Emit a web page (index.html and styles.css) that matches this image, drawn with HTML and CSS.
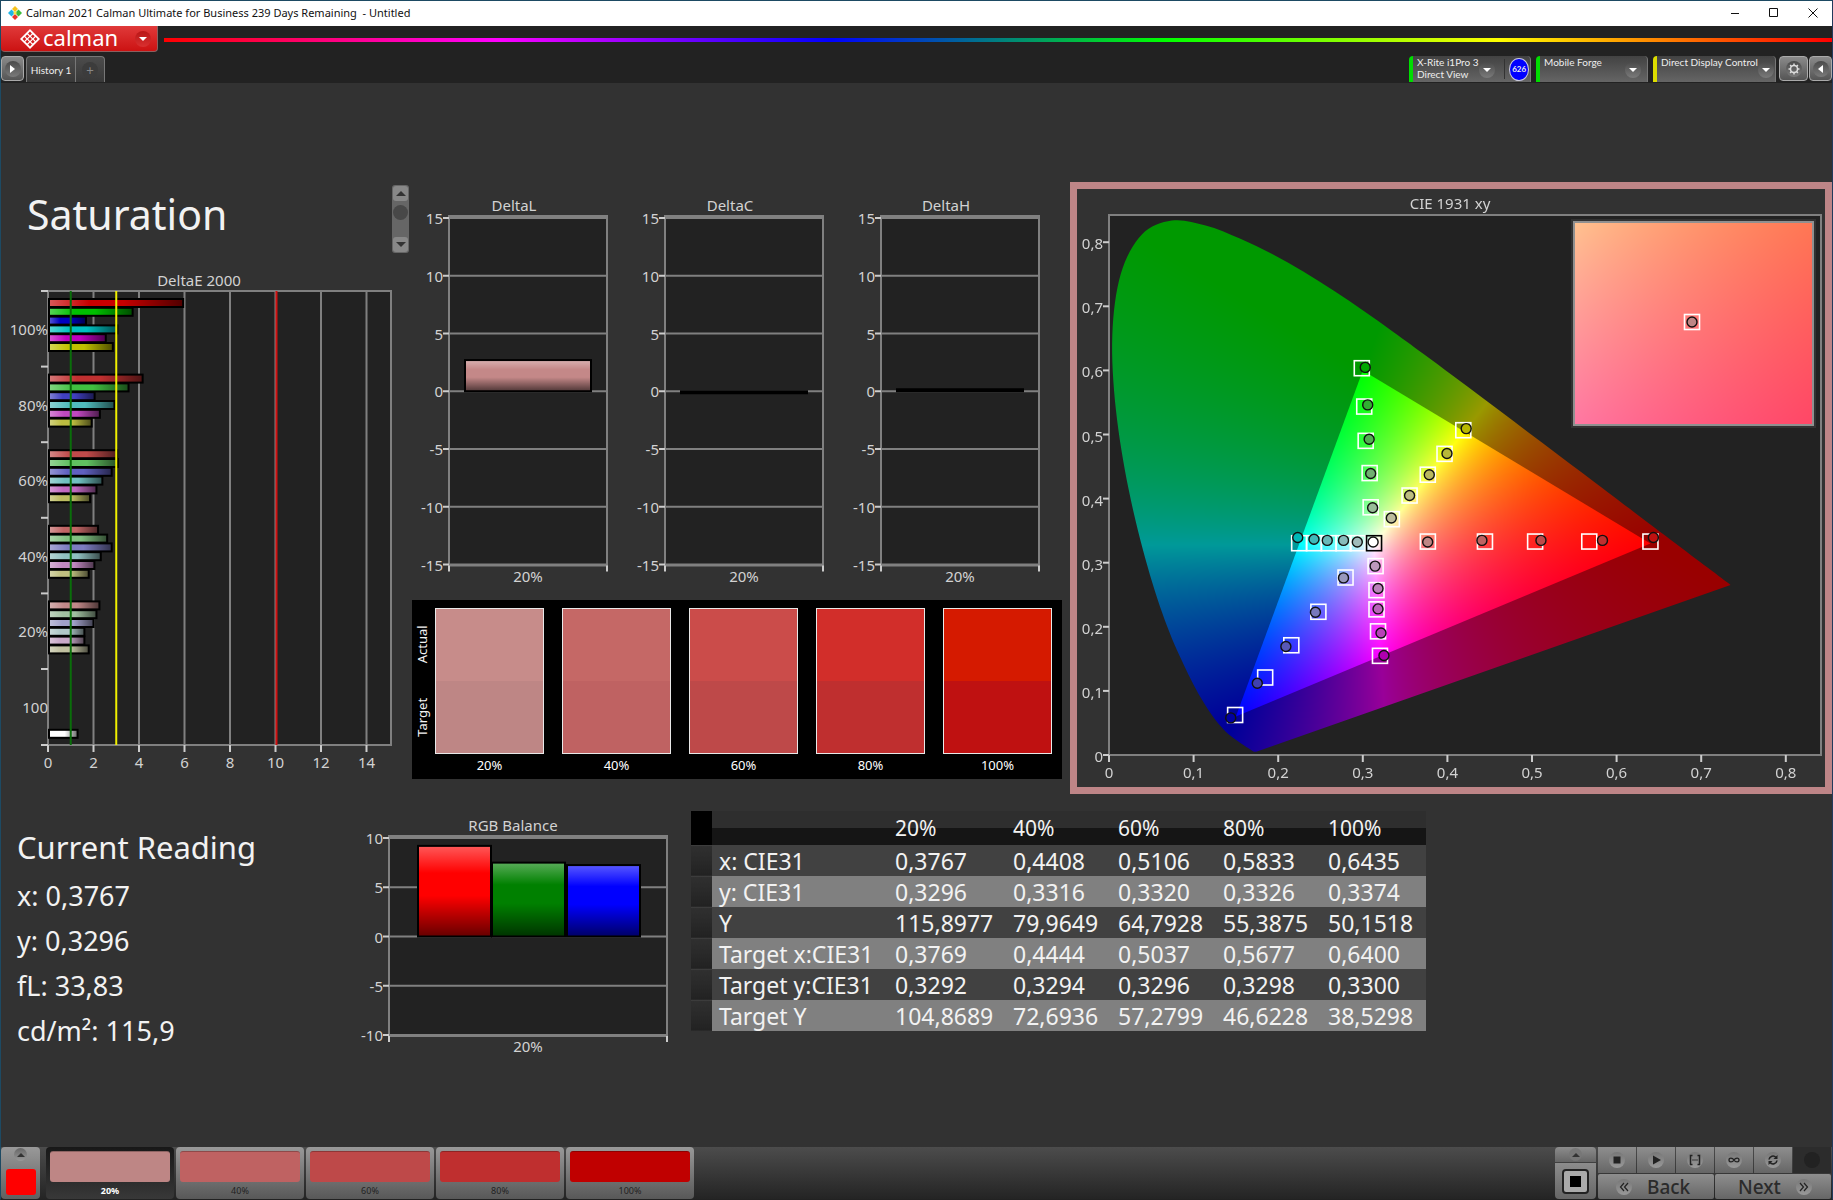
FILE: index.html
```
<!DOCTYPE html>
<html lang="en">
<head>
    <meta charset="UTF-8">
    <meta name="viewport" content="width=device-width, initial-scale=1.0">
    <title>Calman 2021 - Untitled</title>
    <link rel="stylesheet" href="styles.css">
</head>
<body>
<div class="window">

    <header class="titlebar">
        <svg class="app-icon" viewBox="0 0 14 14">
            <path d="M7 0l3 3-3 3-3-3z" fill="#f6c21c"/>
            <path d="M3.500 3.500L7 7l-3.500 3.500L0 7z" fill="#1fb5e8"/>
            <path d="M10.500 3.500L14 7l-3.500 3.500L7 7z" fill="#3dbb3d"/>
            <path d="M7 8l3 3-3 3-3-3z" fill="#e8352c"/>
            <path d="M7 5l2 2-2 2-2-2z" fill="#f4e14a"/>
        </svg>
        <span class="app-title">Calman 2021 Calman Ultimate for Business 239 Days Remaining &nbsp;- Untitled</span>
        <button class="win-btn" aria-label="Minimize"><svg viewBox="0 0 10 10"><path d="M1 5.500h8"/></svg></button>
        <button class="win-btn" aria-label="Maximize"><svg viewBox="0 0 10 10"><path d="M.5.5h8v8h-8z"/></svg></button>
        <button class="win-btn" aria-label="Close"><svg viewBox="0 0 10 10"><path d="M.5.5l9 9M9.500.5l-9 9"/></svg></button>
    </header>

    <div class="brandbar">
        <button class="brand">
            <svg class="brand-mark" viewBox="0 0 20 20">
                <path d="M10 0L20 10 10 20 0 10z" fill="#fff"/>
                <g fill="#d5201f">
                    <path d="M10 2.600l1.900 1.900-1.900 1.900-1.900-1.900zM7.200 5.400l1.900 1.900-1.900 1.900-1.900-1.900zM12.800 5.400l1.900 1.900-1.900 1.900-1.900-1.900zM4.400 8.100l1.900 1.900-1.900 1.900L2.500 10zM10 8.100l1.900 1.900-1.900 1.900L8.100 10zM15.600 8.100l1.900 1.900-1.900 1.900-1.900-1.900zM7.200 10.800l1.900 1.900-1.900 1.900-1.900-1.900zM12.800 10.800l1.900 1.900-1.900 1.900-1.900-1.900zM10 13.600l1.900 1.900-1.900 1.900-1.900-1.900z"/>
                </g>
            </svg>
            <span class="brand-name">calman</span>
            <span class="knob knob-red"><i class="tri tri-down"></i></span>
        </button>
        <div class="rainbow"></div>
    </div>

    <nav class="tabbar">
        <button class="mini-btn" aria-label="Expand"><span class="knob"><i class="tri tri-right"></i></span></button>
        <button class="tab">History 1</button>
        <button class="tab tab-add" aria-label="Add tab"><span class="knob">+</span></button>
        <div class="devices">
            <button class="device device-meter"><span class="device-name">X-Rite i1Pro 3<br>Direct View</span><span class="knob"><i class="tri tri-down"></i></span><span class="device-split"></span><span class="badge">626</span></button>
            <button class="device device-source"><span class="device-name">Mobile Forge</span><span class="knob"><i class="tri tri-down"></i></span></button>
            <button class="device device-display"><span class="device-name">Direct Display Control</span><span class="knob"><i class="tri tri-down"></i></span></button>
            <button class="mini-btn settings" aria-label="Settings">
                <span class="knob"><svg viewBox="0 0 12 12"><circle cx="6" cy="6" r="3.500" fill="none" stroke="#ddd" stroke-width="1.500"/><path d="M6 .5v2M6 9.500v2M.5 6h2M9.500 6h2M2.100 2.100l1.400 1.400M8.500 8.500l1.400 1.400M2.100 9.900l1.400-1.400M8.500 3.500l1.400-1.400" stroke="#ddd" stroke-width="1.500"/></svg></span>
            </button>
            <button class="mini-btn" aria-label="Collapse"><span class="knob"><i class="tri tri-left"></i></span></button>
        </div>
    </nav>

    <main class="workspace">
        <section class="upper">
            <div class="col-left">
                <h1>Saturation</h1>
                <svg id="deltaE" class="chart chart-de"></svg>
            </div>
            <div class="scroller">
                <button aria-label="Up"><i class="tri tri-up"></i></button>
                <span class="scroller-thumb"></span>
                <button aria-label="Down"><i class="tri tri-down"></i></button>
            </div>
            <div class="col-mid">
                <div class="deltas">
                    <svg id="deltaL" class="chart chart-delta"></svg>
                    <svg id="deltaC" class="chart chart-delta"></svg>
                    <svg id="deltaH" class="chart chart-delta"></svg>
                </div>
                <div class="swatches">
                    <div class="swatch-side"><span>Actual</span><span>Target</span></div>
                    <div class="swatch"><div class="pair"><i class="a20"></i><i class="t20"></i></div>20%</div>
                    <div class="swatch"><div class="pair"><i class="a40"></i><i class="t40"></i></div>40%</div>
                    <div class="swatch"><div class="pair"><i class="a60"></i><i class="t60"></i></div>60%</div>
                    <div class="swatch"><div class="pair"><i class="a80"></i><i class="t80"></i></div>80%</div>
                    <div class="swatch"><div class="pair"><i class="a100"></i><i class="t100"></i></div>100%</div>
                </div>
            </div>
            <div class="cie">
                <canvas id="cieFill" width="748" height="598"></canvas>
                <svg id="ciePlot" class="chart" viewBox="0 0 748 598"></svg>
            </div>
        </section>

        <section class="lower">
            <div class="reading">
                <h2>Current Reading</h2>
                <p>x: 0,3767</p>
                <p>y: 0,3296</p>
                <p>fL: 33,83</p>
                <p>cd/m²: 115,9</p>
            </div>
            <svg id="rgb" class="chart chart-rgb"></svg>
            <table class="data">
                <thead>
                    <tr><td class="grip"></td><td class="name"></td><th class="first">20%</th><th>40%</th><th>60%</th><th>80%</th><th>100%</th></tr>
                </thead>
                <tbody>
                    <tr><td class="grip"></td><th>x: CIE31</th><td>0,3767</td><td>0,4408</td><td>0,5106</td><td>0,5833</td><td>0,6435</td></tr>
                    <tr><td class="grip"></td><th>y: CIE31</th><td>0,3296</td><td>0,3316</td><td>0,3320</td><td>0,3326</td><td>0,3374</td></tr>
                    <tr><td class="grip"></td><th>Y</th><td>115,8977</td><td>79,9649</td><td>64,7928</td><td>55,3875</td><td>50,1518</td></tr>
                    <tr><td class="grip"></td><th>Target x:CIE31</th><td>0,3769</td><td>0,4444</td><td>0,5037</td><td>0,5677</td><td>0,6400</td></tr>
                    <tr><td class="grip"></td><th>Target y:CIE31</th><td>0,3292</td><td>0,3294</td><td>0,3296</td><td>0,3298</td><td>0,3300</td></tr>
                    <tr><td class="grip"></td><th>Target Y</th><td>104,8689</td><td>72,6936</td><td>57,2799</td><td>46,6228</td><td>38,5298</td></tr>
                </tbody>
            </table>
        </section>
    </main>

    <footer class="footer">
        <button class="current" aria-label="Current color"><span class="knob"><i class="tri tri-up"></i></span><i class="current-color"></i></button>
        <div class="steps">
            <button class="step active"><i class="t20"></i>20%</button>
            <button class="step"><i class="t40"></i>40%</button>
            <button class="step"><i class="t60"></i>60%</button>
            <button class="step"><i class="t80"></i>80%</button>
            <button class="step"><i class="full"></i>100%</button>
        </div>
        <div class="pattern">
            <button class="pattern-up" aria-label="Pattern menu"><span class="knob"><i class="tri tri-up"></i></span></button>
            <button class="pattern-view" aria-label="Pattern"><i></i></button>
        </div>
        <div class="transport">
            <button aria-label="Stop"><span class="knob"><svg viewBox="0 0 12 12"><path d="M2.500 2.500h7v7h-7z" fill="#222"/></svg></span></button>
            <button aria-label="Read"><span class="knob"><svg viewBox="0 0 12 12"><path d="M3 1.500l8 4.500-8 4.500z" fill="#222"/></svg></span></button>
            <button aria-label="Read series"><span class="knob"><svg viewBox="0 0 12 12"><path d="M3.500 1.500h-2v9h2M8.500 1.500h2v9h-2M3.500 6h1M5.500 6h1M7.500 6h1" fill="none" stroke="#222" stroke-width="1.500"/></svg></span></button>
            <button aria-label="Continuous"><span class="knob"><svg viewBox="0 0 12 12"><path d="M6 6C4.500 3.500 1 3.500 1 6s3.500 2.500 5 0 5-2.500 5 0-3.500 2.500-5 0z" fill="none" stroke="#222" stroke-width="1.300"/></svg></span></button>
            <button aria-label="Refresh"><span class="knob"><svg viewBox="0 0 12 12"><path d="M2 5.500A4 4 0 0 1 9 3.500M10 6.500A4 4 0 0 1 3 8.500" fill="none" stroke="#222" stroke-width="1.600"/><path d="M10.500 1v4h-4zM1.500 11V7h4z" fill="#222"/></svg></span></button>
            <button class="off" aria-label="Idle"><span class="knob"></span></button>
            <button class="wide"><span class="knob"><svg viewBox="0 0 12 12"><path d="M6 2L2.500 6 6 10M10 2L6.500 6 10 10" fill="none" stroke="#222" stroke-width="1.200"/></svg></span>Back</button>
            <button class="wide wide-next">Next<span class="knob"><svg viewBox="0 0 12 12"><path d="M2 2l3.500 4L2 10M6 2l3.500 4L6 10" fill="none" stroke="#222" stroke-width="1.200"/></svg></span></button>
        </div>
    </footer>
</div>
<script src="charts.js"></script>
</body>
</html>
```
FILE: styles.css
```
* { box-sizing: border-box; }
body { margin: 0; background: #323232; font-family: "Noto Sans", "Open Sans", sans-serif; color: #f2f2f2; }
button { font: inherit; color: inherit; border: 0; padding: 0; background: none; cursor: pointer; }
.window { display: flex; flex-direction: column; min-height: 100vh; border: 1px solid #1d4a63; border-bottom-color: #222; border-right-color: #223a5c; }

/* title bar */
.titlebar { display: flex; align-items: center; height: 25px; padding-bottom: 1px; background: #fff; color: #111; }
.app-icon { width: 14px; height: 14px; margin: 0 4px 0 7px; }
.app-title { flex: 1; font-size: 11px; line-height: 16px; }
.win-btn { width: 39px; height: 24px; display: flex; align-items: center; justify-content: center; }
.win-btn svg { width: 10px; height: 10px; fill: none; stroke: #111; }

.brandbar { display: flex; align-items: center; height: 30px; background: #222; }
.brand { display: flex; align-items: center; align-self: flex-start; width: 157px; height: 26px; padding: 0 6px 0 19px; border: 1px solid #8b6060; border-width: 0 1px 1px 0; border-radius: 0 0 4px 4px; background: linear-gradient(#e03a3a, #cc1212); color: #fff; }
.brand-mark { width: 20px; height: 20px; }
.brand-name { flex: 1; margin-left: 3px; padding-bottom: 3px; font-size: 22px; line-height: 22px; text-align: left; }
.rainbow { flex: 1; height: 4px; margin: 0 0 3px 6px; background: linear-gradient(90deg, #f00, #f0f 20%, #00f 40%, #0f0 60%, #ff0 80%, #f00); }

.knob { display: inline-flex; align-items: center; justify-content: center; flex: none; width: 16px; height: 16px; border-radius: 50%; background: linear-gradient(#4a4a4a, #7a7a7a); }
.knob svg { width: 12px; height: 12px; }
.knob-red { background: linear-gradient(#b91616, #d93030); }
.tri { display: block; border: 4px solid transparent; }
.tri-down { border-top-color: #fff; border-bottom: 0; }
.tri-up { border-bottom-color: #333; border-top: 0; }
.tri-right { border-left: 5px solid #fff; border-right: 0; }
.tri-left { border-right: 5px solid #fff; border-left: 0; }

/* tabs and devices */
.tabbar { display: flex; height: 27px; padding-bottom: 1px; background: #222; font-family: Lato, sans-serif; font-size: 10px; color: #eee; }
.mini-btn { width: 23px; height: 25px; border: 1px solid #aaa; border-radius: 4px; background: linear-gradient(#8a8a8a, #555); display: flex; align-items: center; justify-content: center; }
.tab { width: 50px; margin-left: 2px; border: 1px solid #777; border-bottom: 0; border-radius: 4px 0 0 0; background: linear-gradient(#4c4c4c, #383838); }
.tab-add { width: 29px; margin-left: 0; border-left: 0; border-radius: 0 4px 0 0; color: #888; font-size: 13px; }
.tab-add .knob { background: #3c3c3c; }
.devices { display: flex; margin-left: auto; gap: 5px; }
.device { display: flex; align-items: center; width: 112px; padding: 0 6px 0 4px; border: 1px solid #777; border-width: 0 1px 0 4px; border-radius: 4px 4px 0 0; background: linear-gradient(#424242, #656565); text-align: left; line-height: 12px; }
.device-name { flex: 1; align-self: flex-start; white-space: nowrap; }
.device .knob { margin-top: 2px; }
.device-meter { width: 122px; padding-right: 1px; border-left-color: #0d0; }
.device-source { border-left-color: #0d0; }
.device-display { width: 123px; border-left-color: #dd0; }
.device-split { width: 1px; height: 20px; margin: 0 5px 0 9px; background: #333; }
.badge { width: 23px; height: 23px; border: 1px solid #ccd; border-radius: 50%; background: #00f; font-size: 8px; font-weight: bold; line-height: 21px; text-align: center; }
.settings { width: 29px; margin: 0 -4px 0 -2px; }

/* workspace */
.workspace { flex: 1; padding-top: 99px; }
.upper, .lower { display: flex; align-items: flex-start; }
.col-left { width: 391px; }
h1 { margin: 0; padding: 8px 0 0 26px; font-size: 41px; line-height: 48px; font-weight: normal; }
h2 { margin: 0; font-size: 31px; line-height: 40px; font-weight: normal; }
.chart { display: block; }
.chart text { font-size: 15px; fill: #d2d2d2; }
.chart-de { width: 391px; height: 510px; margin-top: 31px; }
.chart-delta { width: 216px; height: 418px; }
.chart-rgb { width: 320px; height: 250px; }
.scroller { display: flex; flex-direction: column; justify-content: space-between; align-items: center; width: 17px; height: 68px; margin: 3px 3px 0 0; padding: 1px; border-radius: 3px; background: #666; }
.scroller button { display: flex; align-items: center; justify-content: center; width: 15px; height: 15px; border-radius: 3px; background: #888; }
.scroller .tri { border-width: 5px; }
.scroller .tri-up { border-top: 0; }
.scroller .tri-down { border-top-color: #333; border-bottom: 0; }
.scroller-thumb { width: 15px; height: 15px; margin-bottom: 14px; border-radius: 50%; background: #484848; }
.col-mid { width: 650px; margin-right: 8px; }
.deltas { display: flex; }

.swatches { display: flex; gap: 18px; height: 179px; padding: 8px 10px 0 0; background: #000; font-size: 13px; }
.swatch-side { display: flex; flex-direction: row-reverse; justify-content: space-around; width: 146px; height: 22px; margin: 0 -142px 0 0; transform: rotate(-90deg) translateX(-146px); transform-origin: 0 0; line-height: 20px; }
.swatch { flex: 1; text-align: center; line-height: 23px; color: #fff; }
.swatch-side + .swatch { margin-left: 1px; }
.pair { display: flex; flex-direction: column; height: 146px; border: 1px solid #e8e8e8; }
.pair i { flex: 1; }
.a20 { background: #c78c8a; } .t20 { background: #be8685; }
.a40 { background: #c56866; } .t40 { background: #bf6262; }
.a60 { background: #cb4c4a; } .t60 { background: #be4949; }
.a80 { background: #d22e2a; } .t80 { background: #bf2f2f; }
.a100 { background: #d51a00; } .t100 { background: #bf1111; }
.full { background: #c00000; }

.cie { position: relative; flex: 1; border: 7px solid #be8587; }
.cie canvas { position: absolute; inset: 0; width: 100%; height: 100%; }
.cie svg { position: relative; width: 100%; }

.lower { margin-top: 17px; }
.reading { width: 350px; padding: 16px 0 0 16px; }
.reading p { margin: 0; font-size: 27px; line-height: 45px; }
.reading h2 { margin-bottom: 6px; }

.data { border-collapse: collapse; table-layout: fixed; width: 735px; margin-left: 20px; font-size: 23px; line-height: 30px; }
.data td, .data th { height: 31px; padding: 0 0 0 7px; font-weight: normal; text-align: left; white-space: nowrap; }
.data thead tr { height: 34px; background: linear-gradient(#2e2e2e 50%, #151515 50%); }
.data thead th { height: 34px; font-size: 21px; width: 105px; }
.data thead .first { width: 118px; }
.data thead .name { width: 176px; }
.data tbody tr { background: #414141; }
.data tbody tr:nth-child(even) { background: #808080; }
.data .grip { width: 21px; padding: 0; background: linear-gradient(#303030, #222); border-top: 1px solid #3c3c3c; }
.data thead .grip { background: #000; border-top: 0; }

/* footer */
.footer { display: flex; height: 52px; padding-right: 1px; background: linear-gradient(#4c4c4c, #242424); }
.current { display: flex; flex-direction: column; align-items: center; justify-content: space-between; width: 39px; height: 52px; padding: 1px 0 4px; border-radius: 4px; background: linear-gradient(#999, #606060); }
.current .knob { width: 13px; height: 13px; background: linear-gradient(#666, #999); }
.current-color { width: 30px; height: 26px; border-radius: 3px; background: #f00; }
.steps { display: flex; gap: 2px; margin: 0 auto 0 6px; }
.step { display: flex; flex-direction: column; align-items: center; width: 128px; height: 52px; padding: 4px 4px 0; border-radius: 4px; background: linear-gradient(#999, #585858); color: #222; font-size: 9px; line-height: 17px; }
.step i { flex: none; align-self: stretch; height: 31px; border-radius: 3px; border-top: 1px solid rgba(0, 0, 0, .25); }
.step.active { background: linear-gradient(#181818, #383838); color: #fff; font-weight: bold; }
.pattern { display: flex; flex-direction: column; width: 41px; margin-right: 2px; }
.pattern button { display: flex; align-items: center; justify-content: center; background: linear-gradient(#8c8c8c, #666); }
.pattern-up { height: 15px; border-radius: 4px 4px 0 0; }
.pattern-up .knob { width: 13px; height: 13px; background: #777; }
.pattern-view { height: 36px; margin-top: 1px; border-radius: 0 0 4px 4px; }
.pattern-view i { width: 27px; height: 25px; border: 2px solid #222; border-radius: 4px; background: linear-gradient(#000, #000) center / 11px 11px no-repeat, #aaa; }
.transport { display: grid; grid-template-columns: repeat(6, 1fr); grid-template-rows: 26px 25px; gap: 1px; width: 233px; height: 52px; }
.transport button { display: flex; align-items: center; justify-content: center; background: linear-gradient(#8e8e8e, #666); }
.transport .knob { background: linear-gradient(#777, #999); }
.transport .wide { grid-column: span 3; justify-content: flex-start; gap: 15px; padding-left: 18px; border-radius: 2px; font-size: 19px; line-height: 24px; font-weight: 500; color: #2b2b2b; }
.transport .wide-next { padding-left: 23px; }
.transport .off { background: #2c2c2c; }
.transport .off .knob { background: #222; }
```
FILE: charts.js
```
function line(x1, y1, x2, y2, color, w) {
    return `<line x1="${x1}" y1="${y1}" x2="${x2}" y2="${y2}" stroke="${color || '#808080'}" stroke-width="${w || 2}"/>`;
}

function rect(x, y, w, h, attrs) {
    return `<rect x="${x}" y="${y}" width="${w}" height="${h}" ${attrs}/>`;
}

// anchor: start, middle or end; y is the middle of the text
function label(x, y, text, anchor) {
    return `<text x="${x}" y="${y + 5}" text-anchor="${anchor || 'middle'}">${text}</text>`;
}

function gloss(id, vertical) {
    const dir = vertical ? 'x2="0" y2="1"' : 'x2="1" y2="0"';
    return `<defs><linearGradient id="${id}" x1="0" y1="0" ${dir}>
        <stop offset="0" stop-color="#fff" stop-opacity=".35"/>
        <stop offset=".3" stop-color="#fff" stop-opacity="0"/>
        <stop offset=".55" stop-color="#000" stop-opacity="0"/>
        <stop offset="1" stop-color="#000" stop-opacity=".6"/>
    </linearGradient></defs>`;
}

function drawDeltaE() {
    const left = 47, right = 390, top = 22, bottom = 476, unit = 22.75, group = 75.6;
    const groups = [
        ['100%', [5.94, 3.72, 1.67, 3.05, 2.54, 2.85], ['#c80000', '#00c000', '#0000c0', '#00c0c0', '#c000c0', '#c0c000']],
        ['80%', [4.16, 3.54, 2.05, 2.92, 2.28, 1.92], ['#c03030', '#40c040', '#4040c0', '#50bcbc', '#c048c0', '#bcbc40']],
        ['60%', [3.04, 3.07, 2.8, 2.39, 2.13, 1.85], ['#c04a4a', '#60c060', '#6060c0', '#70c0c0', '#c068c0', '#bcbc60']],
        ['40%', [2.2, 2.6, 2.8, 2.32, 2.04, 1.79], ['#c06464', '#80c080', '#7c7cc0', '#90c0c0', '#c088c0', '#c0c080']],
        ['20%', [2.26, 2.13, 2, 1.6, 1.6, 1.79], ['#c08888', '#a0c0a0', '#a0a0c8', '#b0c8c8', '#c8a8c8', '#c0c0a0']],
        ['100', [0, 0, 0, 0, 0, 0, 1.3], ['', '', '', '', '', '', '#fff']]
    ];
    let out = gloss('glossH', false) + rect(left, top, right - left, bottom - top, 'fill="#222" stroke="#808080" stroke-width="2"');
    for (let v = 0; v <= 14; v += 2) {
        const x = left + v * unit;
        out += line(x, top, x, bottom) + line(x, bottom, x, bottom + 7, '#ccc');
        out += label(x, 494, v);
    }
    groups.forEach(([name, values, colors], i) => {
        const y = top + i * group;
        out += line(left - 7, y, left, y, '#ccc') + label(left, y + 39, name, 'end');
        values.forEach((v, k) => {
            if (!v) return;
            const box = [left + 1, y + 8 + k * 8.8, v * unit - 1, 8];
            out += rect(...box, `fill="${colors[k]}"`) + rect(...box, 'fill="url(#glossH)" stroke="#000" stroke-width="2"');
        });
    });
    out += line(left - 7, bottom, left, bottom, '#ccc');
    out += line(left + unit, top, left + unit, bottom, '#0a6e0a');
    out += line(left + 3 * unit, top, left + 3 * unit, bottom, '#f0f000');
    out += line(left + 10 * unit + 1, top, left + 10 * unit + 1, bottom, '#d01010');
    out += label(198, 12, 'DeltaE 2000');
    document.getElementById('deltaE').innerHTML = out;
}

// vertical chart with a zero line, used by the delta charts and the RGB balance
function drawBars(id, o) {
    const zero = o.first + o.max * o.unit;
    const bottom = o.first + 2 * o.max * o.unit + 1;
    let out = gloss('gloss' + id, true) + rect(o.left, o.top, o.right - o.left, bottom - o.top, 'fill="#222" stroke="#808080" stroke-width="2"');
    for (let v = o.max; v >= -o.max; v -= 5) {
        const y = o.first + (o.max - v) * o.unit;
        out += line(o.left, y, o.right, y) + line(o.left - 6, y, o.left, y, '#ccc');
        out += label(o.left - 6, y + 1, v, 'end');
    }
    out += line(o.left, bottom, o.left, bottom + 6, '#ccc') + line(o.right, bottom, o.right, bottom + 6, '#ccc');
    o.bars.forEach(([x, w, v, color]) => {
        const h = Math.max(Math.abs(v) * o.unit, 2);
        const box = [x, v < 0 ? zero : zero - h, w, h];
        out += rect(...box, `fill="${color}"`) + rect(...box, `fill="url(#gloss${id})" stroke="#000" stroke-width="2"`);
    });
    out += label(o.titleX, o.titleY, o.title) + label((o.left + o.right) / 2, bottom + 11, '20%');
    document.getElementById(id).innerHTML = out;
}

const delta = { left: 37, right: 195, top: 34, first: 36, unit: 11.55, max: 15, titleX: 102, titleY: 24 };

// CIE 1931 diagram
const X0 = 32, Y0 = 566, SX = 846, SY = 641;
const px = x => X0 + x * SX;
const py = y => Y0 - y * SY;

const locus = [
    [.1741, .005], [.1714, .0051], [.1689, .0069], [.1644, .0109], [.1566, .0177], [.144, .0297], [.1355, .0399],
    [.1241, .0578], [.1096, .0868], [.0913, .1327], [.0687, .2007], [.0454, .295], [.0235, .4127], [.0082, .5384],
    [.0039, .6548], [.0139, .7502], [.0389, .812], [.0743, .8338], [.1142, .8262], [.1547, .8059], [.1929, .7816],
    [.2296, .7543], [.2658, .7243], [.3016, .6923], [.3373, .6589], [.3731, .6245], [.4441, .5547], [.5125, .4866],
    [.5752, .4242], [.627, .3725], [.6658, .334], [.7079, .292], [.7347, .2653]
];

function xyColor(x, y, gain) {
    const X = x / y, Z = (1 - x - y) / y;
    const rgb = [
        3.2406 * X - 1.5372 - .4986 * Z,
        -.9689 * X + 1.8758 + .0415 * Z,
        .0557 * X - .204 + 1.057 * Z
    ].map(c => Math.max(c, 0));
    const m = Math.max(...rgb);
    return rgb.map(c => c / m * 255 * gain);
}

function colorLayer(w, h, toXY, gain) {
    const c = document.createElement('canvas');
    c.width = w;
    c.height = h;
    const ctx = c.getContext('2d');
    const img = ctx.createImageData(w, h);
    for (let j = 0; j < h; j++) {
        for (let i = 0; i < w; i++) {
            const [x, y] = toXY(i, j);
            const rgb = xyColor(x, Math.max(y, .001), gain);
            img.data.set([rgb[0], rgb[1], rgb[2], 255], (j * w + i) * 4);
        }
    }
    ctx.putImageData(img, 0, 0);
    return c;
}

function drawCieFill() {
    const canvas = document.getElementById('cieFill');
    const ctx = canvas.getContext('2d');
    const toXY = (i, j) => [(i - X0) / SX, (Y0 - j) / SY];
    ctx.fillStyle = '#222';
    ctx.fillRect(32, 26, 712, 540);

    // spectral locus, smoothed
    const p = locus.map(([x, y]) => [px(x), py(y)]);
    ctx.save();
    ctx.beginPath();
    ctx.moveTo(...p[0]);
    for (let i = 0; i < p.length - 1; i++) {
        const a = p[i - 1] || p[i], b = p[i], c = p[i + 1], d = p[i + 2] || c;
        ctx.bezierCurveTo(b[0] + (c[0] - a[0]) / 6, b[1] + (c[1] - a[1]) / 6,
            c[0] - (d[0] - b[0]) / 6, c[1] - (d[1] - b[1]) / 6, c[0], c[1]);
    }
    ctx.closePath();
    ctx.clip();
    ctx.drawImage(colorLayer(748, 598, toXY, .6), 0, 0);
    ctx.restore();

    // gamut triangle
    ctx.save();
    ctx.beginPath();
    ctx.moveTo(px(.64), py(.33));
    ctx.lineTo(px(.3), py(.6));
    ctx.lineTo(px(.15), py(.06));
    ctx.closePath();
    ctx.clip();
    ctx.drawImage(colorLayer(748, 598, toXY, 1), 0, 0);
    ctx.restore();

    // zoomed inset around the selected point
    ctx.fillStyle = '#323232';
    ctx.fillRect(494, 30, 245, 209);
    ctx.drawImage(colorLayer(239, 203, (i, j) => [.3767 + (i - 119) / 119 * .024, .3296 - (j - 101) / 101 * .028], 1), 497, 33);
}

function drawCiePlot() {
    // [target x, target y, measured x, measured y, color]
    const points = [
        [.2988, .6034, .3029, .6047, '#00a800'], [.3017, .5436, .3058, .5462, '#30b030'], [.3034, .4901, .3075, .4927, '#50b050'],
        [.3081, .4398, .3093, .4392, '#70b070'], [.3093, .3864, .3116, .3857, '#98bc98'],
        [.4188, .5067, .4222, .5092, '#b8b800'], [.3966, .4698, .3995, .4704, '#b8b838'], [.3768, .4373, .3786, .4373, '#b8b860'],
        [.3553, .4048, .3553, .4048, '#bcbc80'], [.3343, .3679, .3337, .3698, '#bcbc9c'],
        [.3769, .333, .3767, .3323, '#be8685'], [.4444, .333, .4408, .3348, '#bf6262'], [.5037, .333, .5106, .3348, '#be4949'],
        [.5677, .333, .5833, .3348, '#bf2f2f'], [.64, .333, .6435, .3393, '#bf1111'],
        [.2796, .2769, .2772, .2763, '#9898bc'], [.2475, .2234, .244, .2228, '#7878bc'], [.2155, .1712, .2091, .1693, '#5858b8'],
        [.1846, .1209, .1753, .112, '#4040b0'], [.1491, .0624, .1439, .0579, '#0000a0'],
        [.2248, .3304, .2231, .3393, '#00b8b8'], [.2423, .3304, .2423, .3367, '#40b8b8'], [.2598, .3304, .258, .3348, '#68b8b8'],
        [.2772, .3304, .2772, .3348, '#88bcbc'], [.2941, .3304, .2935, .3323, '#a0bcbc'],
        [.3151, .2947, .3145, .2947, '#bc98bc'], [.3162, .2572, .318, .2597, '#bc80bc'], [.3162, .2272, .318, .2279, '#bc60bc'],
        [.318, .1929, .3215, .1903, '#b840b8'], [.3203, .1547, .325, .1553, '#b000b0']
    ];
    const target = (x, y, color) => rect(x - 7.5, y - 7.5, 15, 15, `fill="none" stroke="${color}" stroke-width="1.6"`);
    const dot = (x, y, color) => `<circle cx="${x}" cy="${y}" r="5" fill="${color}" stroke="#111" stroke-width="1.4"/>`;

    let out = rect(32, 26, 712, 540, 'fill="none" stroke="#808080" stroke-width="2"');
    for (let i = 0; i <= 8; i++) {
        const text = i ? '0,' + i : '0';
        out += line(px(i / 10), 566, px(i / 10), 573, '#ccc') + label(px(i / 10), 584, text);
        out += line(26, py(i / 10), 32, py(i / 10), '#ccc') + label(26, py(i / 10) + 2, text, 'end');
    }
    points.forEach(p => out += target(px(p[0]), py(p[1]), '#fff') + dot(px(p[2]), py(p[3]), p[4]));
    out += target(px(.3133), py(.3304), '#000') + dot(px(.3122), py(.3323), '#fff');
    out += rect(497, 33, 239, 203, 'fill="none" stroke="#909090" stroke-width="2"');
    out += target(615, 133, '#fff') + dot(615, 133, '#be8685');
    out += label(373, 15, 'CIE 1931 xy');
    document.getElementById('ciePlot').innerHTML = out;
}

drawDeltaE();
drawBars('deltaL', { ...delta, title: 'DeltaL', bars: [[53, 126, 2.7, '#c48888']] });
drawBars('deltaC', { ...delta, title: 'DeltaC', bars: [[53, 126, -.1, '#000']] });
drawBars('deltaH', { ...delta, title: 'DeltaH', bars: [[53, 126, .1, '#000']] });
drawBars('rgb', {
    left: 38, right: 316, top: 25, first: 27, unit: 9.85, max: 10, titleX: 162, titleY: 15, title: 'RGB Balance',
    bars: [[67, 73, 9.2, '#f00'], [141, 73, 7.5, '#008000'], [216, 73, 7.25, '#00f']]
});
drawCieFill();
drawCiePlot();
```
